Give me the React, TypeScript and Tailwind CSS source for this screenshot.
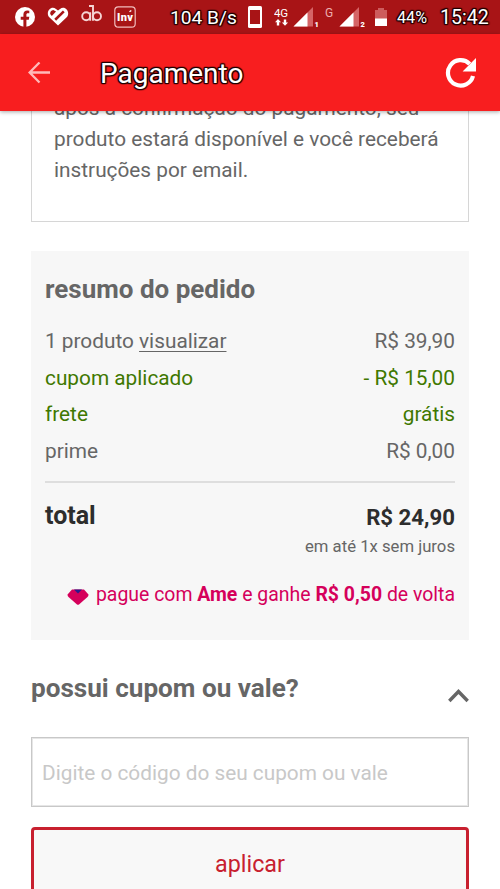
import React from 'react';

const outline =
  '[text-shadow:1px_0_1px_#200,-1px_0_1px_#200,0_1px_1px_#200,0_-1px_1px_#200,1px_1px_1px_#200,-1px_-1px_1px_#200,1px_-1px_1px_#200,-1px_1px_1px_#200]';

function Signal({ sim }: { sim: string }) {
  return (
    <svg width="26" height="24" viewBox="0 0 26 24" className="shrink-0">
      <path d="M20 1 V20.5 H.5 Z" fill="#d56466" />
      <path d="M14.5 6.5 V20.5 H.5 Z" fill="#fff" />
      <text x="21.5" y="20.5" fontSize="7.5" fontWeight="900" fill="#fff">{sim}</text>
    </svg>
  );
}

function StatusBar() {
  return (
    <div className="flex h-[34px] shrink-0 items-start bg-[#a81416] pl-[15px] text-white">
      <svg width="20" height="20" viewBox="0 0 20 20" className="mt-[7px] shrink-0">
        <circle cx="10" cy="10" r="10" fill="#fff" />
        <path d="M8.4 20 V12.7 H5.7 V9.8 H8.4 V7.6 C8.4 4.9 10 3.5 12.3 3.5 L14.3 3.7 V6.2 H12.9 C11.7 6.2 11.4 6.9 11.4 7.8 V9.8 H14.3 L13.8 12.7 H11.4 V20 Z" fill="#a81416" />
      </svg>
      <svg width="22" height="19" viewBox="0 0 22 19" className="ml-[12px] mt-[7px] shrink-0">
        <path d="M11 18.5 L2.3 10.3 C-2 5.2 4 -2 9 2 L11 3.6 L13 2 C18 -2 24 5.2 19.7 10.3 Z" fill="#fff" />
        <path d="M3.2 7 Q3 3.4 6.3 3 L9 4.6 L4.8 9 Z" fill="#a81416" />
        <path d="M8.2 12.7 L16.8 4.4" stroke="#a81416" strokeWidth="2.6" />
      </svg>
      <svg width="22" height="18" viewBox="0 0 22 18" className="ml-[12px] mt-[4px] shrink-0" fill="none" stroke="#f5d4d4" strokeWidth="1.9">
        <circle cx="5.2" cy="12.2" r="4" />
        <circle cx="16" cy="12.2" r="4" />
        <path d="M9.2 8.3 V16.8 M12 16.8 V2 H8" />
      </svg>
      <svg width="22" height="22" viewBox="0 0 22 22" className="ml-[11px] mt-[6px] shrink-0">
        <rect x=".8" y=".8" width="20.4" height="20.4" rx="3.5" fill="none" stroke="#f1bcbc" strokeWidth="1.2" />
        <text x="3" y="14.6" fontSize="11" fontWeight="900" fill="#fff" textLength="16">Inv</text>
        <path d="M15.5 5.8 L17.3 4.5" stroke="#fff" strokeWidth="1.4" />
      </svg>
      <span className={`ml-[34px] mt-[6px] w-[68px] whitespace-nowrap text-[19.2px] leading-6 ${outline}`}>104 B/s</span>
      <svg width="14" height="22" viewBox="0 0 14 22" className="ml-[10px] mt-[6px] shrink-0">
        <rect width="14" height="22" rx="1.5" fill="#fff" />
        <rect x="2" y="4" width="10" height="14" fill="#a81416" />
      </svg>
      <svg width="16" height="20" viewBox="0 0 16 20" className="ml-[12px] mt-[7px] shrink-0">
        <text x="0" y="9.5" fontSize="11.5" fill="#fff" textLength="14">4G</text>
        <path d="M4 12 L7 15.2 H5.2 V18.5 H2.8 V15.2 H1 Z M11 18.8 L7.9 15.6 H9.8 V12.5 H12.2 V15.6 H14.1 Z" fill="#fff" />
      </svg>
      <div className="ml-[3px] mt-[6px]"><Signal sim="1" /></div>
      <span className="ml-[6px] mt-[7px] w-[9px] text-[12px] leading-[13px] text-[#ecaeaf]">G</span>
      <div className="ml-[5px] mt-[6px]"><Signal sim="2" /></div>
      <svg width="12" height="18" viewBox="0 0 12 18" className="ml-[10px] mt-[8px] shrink-0">
        <path d="M0 2 H3 V0 H9 V2 H12 V18 H0 Z" fill="#cd5c5d" />
        <rect y="10.5" width="12" height="7.5" fill="#fff" />
      </svg>
      <span className={`ml-[10px] mt-[6px] w-[31px] text-[16.2px] leading-6 ${outline}`}>44%</span>
      <span className={`ml-[12px] mt-[6px] text-[19.6px] leading-6 ${outline}`}>15:42</span>
    </div>
  );
}

function Header() {
  return (
    <header className="relative z-10 flex h-[77px] shrink-0 items-center bg-[#f81e1f] pl-[28px] pr-[23px] shadow-[0_1px_4px_rgba(0,0,0,0.35)]">
      <svg width="22" height="22" viewBox="0 0 22 22" fill="none" stroke="#ffb9b9" strokeWidth="2.3">
        <path d="M22 10.5 H2 M11.5 .5 L1.6 10.5 L11.5 20.5" />
      </svg>
      <h1 className={`ml-[50px] mt-[2px] text-[28px] leading-8 text-white ${outline}`}>Pagamento</h1>
      <svg width="32" height="32" viewBox="0 0 32 32" className="ml-auto shrink-0">
        <path d="M24.7 6.9 A12.7 12.7 0 1 0 28 19" fill="none" stroke="#fff" strokeWidth="4.2" />
        <path d="M31 1 V14.4 H17.6 Z" fill="#fff" />
      </svg>
    </header>
  );
}

const rows = [
  { label: 'cupom aplicado', value: '- R$ 15,00', color: 'text-[#3f7800]' },
  { label: 'frete', value: 'grátis', color: 'text-[#3f7800]' },
  { label: 'prime', value: 'R$ 0,00', color: 'text-[#666]' },
];

export default function App() {
  return (
    <div className="flex h-[889px] w-[500px] flex-col overflow-hidden bg-white font-[Roboto,sans-serif] text-[#666]">
      <StatusBar />
      <Header />
      <main className="flex min-h-0 flex-1 flex-col overflow-hidden px-[31px]">
        <section className="-mt-[19px] h-[130px] w-[438px] shrink-0 border border-[#d6d6d6] pl-[22px] text-[20.8px] leading-[31px] whitespace-nowrap">
          <p>após a confirmação do pagamento, seu<br />produto estará disponível e você receberá<br />instruções por email.</p>
        </section>

        <section className="mt-[29px] h-[389px] w-[438px] shrink-0 bg-[#f7f7f7] px-[14px] pt-[22px]">
          <h2 className="text-[26px] leading-[32px] font-bold">resumo do pedido</h2>
          <div className="mt-[18px] text-[20.8px] leading-[36.5px]">
            <div className="flex justify-between">
              <span>1 produto <a className="underline decoration-1 underline-offset-[3px]">visualizar</a></span>
              <span>R$ 39,90</span>
            </div>
            {rows.map((r) => (
              <div key={r.label} className={`flex justify-between ${r.color}`}>
                <span>{r.label}</span>
                <span>{r.value}</span>
              </div>
            ))}
          </div>
          <hr className="mt-[12px] border-t-2 border-[#dedede]" />
          <div className="mt-[18px] flex items-start justify-between text-[#2d2d2d]">
            <strong className="text-[25px] leading-[30px]">total</strong>
            <strong className="mt-[1px] text-[22.2px] leading-[30px]">R$ 24,90</strong>
          </div>
          <p className="mt-[4px] text-right text-[16.7px] leading-[22px]">em até 1x sem juros</p>
          <p className="mt-[24px] flex items-center justify-end text-[19.45px] leading-[26px] whitespace-pre text-[#d5005b]">
            <svg width="22" height="16" viewBox="0 0 22 16" className="mr-[7px] mt-[3px]">
              <path d="M5 .5 H17 L21.5 5.5 Q21.5 7 20.5 8 L12 15.4 Q11 16 10 15.4 L1.5 8 Q.5 7 .5 5.5 Z" fill="#d5005b" />
              <path d="M7 .5 H15 L11 4.5 Z" fill="#2b1a8a" />
            </svg>
            <span>pague com <b>Ame</b> e ganhe <b>R$ 0,50</b> de volta</span>
          </p>
        </section>

        <section className="mt-[32px] flex h-[32px] w-[438px] shrink-0 items-start justify-between">
          <h2 className="text-[26.1px] leading-[32px] font-bold">possui cupom ou vale?</h2>
          <svg width="21" height="14" viewBox="0 0 21 14" className="mt-[17px]" fill="none" stroke="#666" strokeWidth="3.4">
            <path d="M1.3 12 L10.5 2.5 L19.7 12" />
          </svg>
        </section>

        <input
          placeholder="Digite o código do seu cupom ou vale"
          className="mt-[33px] h-[70px] w-[438px] shrink-0 border border-[#c8c8c8] px-[10px] pt-[1px] text-[20.8px] shadow-[inset_0_0_0_1px_#e6e6e6] placeholder:text-[#c8c8c8]"
        />
        <button className="mt-[20px] h-[74px] w-[438px] shrink-0 rounded-[4px] border-[3px] border-[#c8202f] bg-[#f8f8f8] text-[23.3px] text-[#c8202f]">
          aplicar
        </button>
      </main>
    </div>
  );
}
